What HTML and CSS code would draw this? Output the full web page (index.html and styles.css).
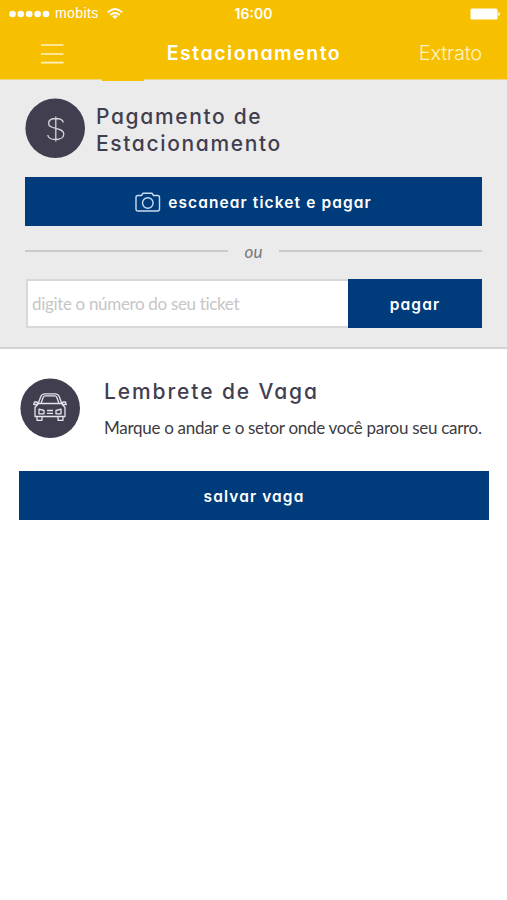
FILE: index.html
```html
<!DOCTYPE html>
<html lang="pt-BR">
<head>
<meta charset="utf-8">
<title>Estacionamento</title>
<link rel="stylesheet" href="styles.css">
</head>
<body>
<header class="header">
  <div class="status">
    <div class="carrier">
      <svg class="signal" width="42" height="8" viewBox="0 0 42 8" fill="#fff"><circle cx="4.500" cy="4" r="3.3"/><circle cx="12.800" cy="4" r="3.3"/><circle cx="21.200" cy="4" r="3.3"/><circle cx="29.600" cy="4" r="3.3"/><circle cx="38" cy="4" r="3.3"/></svg>
      <span class="carrier-name">mobits</span>
      <svg class="wifi" width="16" height="12" viewBox="0 0 16 12" fill="none" stroke="#fff" stroke-width="1.9"><path d="M.8 4.4Q8-2.2 15.2 4.4M3.3 7Q8 2.8 12.7 7"/><path d="M8 11 5.2 8.2Q8 6.2 10.8 8.2Z" fill="#fff" stroke="none"/></svg>
    </div>
    <time class="clock">16:00</time>
    <svg class="battery" width="31" height="12" viewBox="0 0 31 12" fill="#fff"><rect x=".5" y=".5" width="27" height="11" rx="1.5"/><path d="M28.4 4Q30 4.500 30 6T28.400 8Z"/></svg>
  </div>
  <nav class="nav">
    <svg class="menu" width="24" height="22" viewBox="0 0 24 22" stroke="#fff2c4" stroke-width="1.6"><path d="M1 2H23.500M1 11H23.500M1 19.600H23.500"/></svg>
    <h1 class="title">Estacionamento</h1>
    <a class="extract">Extrato</a>
  </nav>
  <i class="tab"></i>
</header>
<main>
  <section class="payment">
    <div class="payment-head">
      <svg class="badge" width="60" height="60" viewBox="0 0 60 60" fill="none" stroke="#d5d3dc" stroke-width="1.3"><circle cx="30.200" cy="30.200" r="29.800" fill="#413e50" stroke="none"/><path d="M30.800 18.500V43.500M38.300 24.500C37.800 21.800 34.800 20.500 30.800 20.500C26.300 20.500 23.600 22.500 23.600 25.400C23.600 32 38.800 28.600 38.800 36C38.800 39.500 35.300 41.500 30.800 41.500C26.300 41.500 23.100 40 22.800 37"/></svg>
      <h2 class="heading">Pagamento de<br>Estacionamento</h2>
    </div>
    <button class="button scan">
      <svg width="26" height="20" viewBox="0 0 26 20" fill="none" stroke="#c9dcf4" stroke-width="1.4"><path d="M3 3.500H6.500L8 1.300H17L18.500 3.500H22.500Q24.500 3.500 24.500 5.500V17Q24.500 19 22.500 19H3Q1 19 1 17V5.500Q1 3.500 3 3.500Z"/><circle cx="12.800" cy="11" r="5.300"/></svg>
      <span class="label">escanear ticket e pagar</span>
    </button>
    <div class="divider"><span class="or">ou</span></div>
    <div class="entry">
      <input class="field" type="text" placeholder="digite o número do seu ticket">
      <button class="button pay"><span class="label">pagar</span></button>
    </div>
  </section>
  <section class="reminder">
    <div class="reminder-head">
      <svg class="badge" width="60" height="60" viewBox="0 0 60 60" fill="none" stroke="#e6e4ed" stroke-width="1.300" stroke-linejoin="round"><circle cx="30.200" cy="30.200" r="29.800" fill="#413e50" stroke="none"/><path d="M18 26 21 18Q22 15.800 24.500 15.800H35.500Q38 15.800 39 18L42 26M21 25.500 23.300 19Q23.800 17.800 25 17.800H35Q36.200 17.800 36.700 19L39 25.500M18.500 25.500H41.500L45 29.500V38.500H15V29.500ZM18 26 17 24H14.500L13.800 26.500H17.500M42 26 43 24H45.500L46.200 26.500H42.500M17 38.500V42.300H22V38.500M38 38.500V42.300H43V38.500"/><path d="M19 31.200 24 32.500V35.800H19ZM41 31.200 36 32.500V35.800H41ZM27 32.500H33M27 35.300H33"/></svg>
      <div class="reminder-text">
        <h2 class="heading wide">Lembrete de Vaga</h2>
        <p class="note">Marque o andar e o setor onde você parou seu carro.</p>
      </div>
    </div>
    <button class="button save"><span class="label">salvar vaga</span></button>
  </section>
</main>
</body>
</html>
```
FILE: styles.css
```css
* { box-sizing: border-box; }
body { margin: 0; min-height: 900px; background: #fff; font-family: Lato, sans-serif; }
h1, h2, p { margin: 0; }
svg { display: block; flex: none; }
.header { position: relative; height: 80px; background: #f6bf00; color: #fff; border-bottom: 1px solid #f0d680; }
.status { height: 27px; padding: 0 6px 0 8px; display: grid; grid-template-columns: 1fr auto 1fr; align-items: center; font: 500 14px/27px "Liberation Sans", sans-serif; }
.carrier { display: flex; align-items: center; }
.carrier-name { margin-left: 5px; letter-spacing: .4px; }
.wifi { margin-left: 8px; }
.clock { font: 600 14px/27px Inter, sans-serif; margin-right: 2px; }
.battery { justify-self: end; }
.nav { height: 53px; padding: 0 25px; display: grid; grid-template-columns: 1fr auto 1fr; align-items: center; }
.menu { margin-left: 15px; }
.title, .heading, .button { font-family: Inter, sans-serif; font-feature-settings: "cv11"; font-weight: 600; }
.title { font-size: 19.5px; line-height: 53px; letter-spacing: 1.5px; padding-left: 1px; }
.extract { justify-self: end; font: 300 20px/53px Inter, sans-serif; letter-spacing: -.2px; color: #fff2c4; }
.tab { position: absolute; left: 102px; bottom: -2px; width: 42px; height: 3px; background: #f6bf00; }
.payment { height: 269px; background: #ebebeb; border-bottom: 2px solid #d2d2d2; padding: 18px 25px 0; }
.payment-head { display: flex; height: 79px; gap: 11px; }
.heading { color: #413e50; font-size: 21px; font-weight: 500; line-height: 27px; letter-spacing: 1.65px; }
.payment .heading { padding-top: 5px; }
.button { display: flex; align-items: center; justify-content: center; border: 0; border-radius: 0; padding: 0; margin: 0; height: 49px; width: 100%; background: #003b7b; color: #fff; font-size: 15.5px; letter-spacing: 1.1px; }
.label { padding-top: 2px; }
.scan { gap: 7px; }
.divider { height: 53px; display: flex; align-items: center; gap: 17px; color: #777; }
.divider::before, .divider::after { content: ""; flex: 1; height: 2px; background: #cbcbcb; margin-bottom: 4px; }
.or { font: italic 17px/20px Lato, sans-serif; margin-bottom: 2px; }
.entry { display: flex; padding-left: 1px; }
.field { flex: 1; min-width: 0; height: 49px; border: 2px solid #d8d8d8; border-right: 0; border-radius: 0; padding: 0 4px; background: #fff; font: 17px Lato, sans-serif; letter-spacing: -.33px; }
.field::placeholder { color: #c6c6c6; opacity: 1; }
.pay { width: 134px; }
.reminder { padding: 29px 18px 0 19px; }
.reminder-head { display: flex; height: 93px; padding-left: 1px; gap: 24px; }
.wide { letter-spacing: 1.9px; }
.note { color: #3d3b42; font-size: 17px; line-height: 24px; letter-spacing: -.29px; white-space: nowrap; margin-top: 11px; }
```
